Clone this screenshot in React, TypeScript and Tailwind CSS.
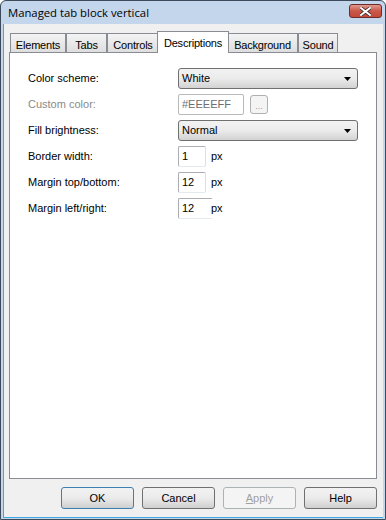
import React from "react";

const tabs = [
  { name: "Elements", w: "w-[56px]" },
  { name: "Tabs", w: "w-[41px]" },
  { name: "Controls", w: "w-[52px]" },
  { name: "Descriptions", w: "w-[72px]" },
  { name: "Background", w: "w-[71px]" },
  { name: "Sound", w: "w-[40px]" },
];

const font = "font-['Liberation_Sans',Arial,sans-serif]";

function Combo({ value }: { value: string }) {
  return (
    <div className="flex h-[21px] w-[180px] items-center justify-between rounded-[3px] border border-[#707070] bg-gradient-to-b from-[#f2f2f2] via-[#ebebeb] to-[#d3d3d3] pl-[3px] pr-[6px]">
      <span className="text-[11px] text-black">{value}</span>
      <svg width="7" height="4" viewBox="0 0 7 4">
        <path d="M0 0h7L3.5 4z" fill="#000" />
      </svg>
    </div>
  );
}

function NumBox({ value, wide }: { value: string; wide?: boolean }) {
  if (wide) {
    return (
      <div className="flex items-center">
        <div className="flex h-[21px] w-[35px] items-center rounded-[2px] border border-[#abadb3] border-b-[#e3e9ef] border-r-[#dbdfe6] bg-white pl-[3px] text-[11px] text-black">
          {value}
        </div>
        <span className="relative -ml-[2px] flex h-[19px] items-center bg-white pr-[2px] text-[11px] text-black">px</span>
      </div>
    );
  }
  return (
    <div className="flex items-center gap-[5px]">
      <div className="flex h-[21px] w-[28px] items-center rounded-[2px] border border-[#abadb3] border-b-[#e3e9ef] border-r-[#dbdfe6] bg-white pl-[3px] text-[11px] text-black">
        {value}
      </div>
      <span className="text-[11px] text-black">px</span>
    </div>
  );
}

function Row({ label, children, dim }: { label: string; children: React.ReactNode; dim?: boolean }) {
  return (
    <div className="flex items-center">
      <span className={`w-[150px] text-[11px] ${dim ? "text-[#8a8a8a]" : "text-black"}`}>{label}</span>
      {children}
    </div>
  );
}

function Btn({ label, primary, disabled }: { label: React.ReactNode; primary?: boolean; disabled?: boolean }) {
  const border = primary ? "border-[#3c7fb1]" : disabled ? "border-[#adb2b5]" : "border-[#707070]";
  const bg = disabled ? "bg-[#f4f4f4]" : "bg-gradient-to-b from-[#f2f2f2] via-[#ebebeb] to-[#cfcfcf]";
  return (
    <div
      className={`flex h-[22px] w-[73px] items-center justify-center rounded-[3px] border ${border} ${bg} text-[11px] ${disabled ? "text-[#a0a0a0]" : "text-black"}`}
    >
      {label}
    </div>
  );
}

export default function App() {
  return (
    <div className={`${font} flex h-[520px] w-[386px] flex-col rounded-t-[6px] border border-[#3c4a5a] bg-[#c4d6ec]`}>
      {/* title bar */}
      <div className="flex h-[23px] items-start justify-between pl-[7px] pr-[3px]">
        <span className="mt-[4px] font-['Open_Sans',sans-serif] text-[11.3px] leading-[15px] text-black">Managed tab block vertical</span>
        <div className="mt-[3px] flex h-[14px] w-[33px] items-center justify-center rounded-[3px] border border-[#6b2c2c] bg-gradient-to-b from-[#e09a8e] via-[#c9574a] to-[#c4493b]">
          <svg width="11" height="9" viewBox="0 0 11 9">
            <path d="M1 1l9 7M10 1L1 8" stroke="#3a2020" strokeWidth="3.4" strokeLinecap="square" />
            <path d="M1 1l9 7M10 1L1 8" stroke="#fff" strokeWidth="2" strokeLinecap="square" />
          </svg>
        </div>
      </div>
      {/* client */}
      <div className="mx-[2px] mb-[1px] flex flex-1 flex-col border-b border-l border-[#3fa8e0] bg-[#f0f0f0] px-[5px] pt-[7px]">
        <div className="flex h-[21px] items-end pl-[1px]">
          {tabs.map((t) => {
            const active = t.name === "Descriptions";
            return (
              <div
                key={t.name}
                className={
                  active
                    ? `relative z-10 -mb-px -mx-[2px] flex h-[22px] ${t.w} shrink-0 items-start justify-center border border-b-0 border-[#898c95] bg-white pt-[3px] text-[11px] tracking-[-0.2px]`
                    : `flex h-[19px] ${t.w} shrink-0 items-start justify-center border border-b-0 border-[#898c95] bg-gradient-to-b from-[#f4f4f4] to-[#dedede] pt-[3px] text-[11px] tracking-[-0.2px]`
                }
              >
                {t.name}
              </div>
            );
          })}
        </div>
        <div className="h-[427px] w-[368px] border border-[#898c95] bg-white pl-[18px] pt-[15px]">
          <div className="flex flex-col gap-[5px]">
            <Row label="Color scheme:">
              <Combo value="White" />
            </Row>
            <Row label="Custom color:" dim>
              <div className="flex items-center gap-[6px]">
                <div className="flex h-[21px] w-[66px] items-center rounded-[2px] border border-[#b9b9b9] bg-white pl-[3px] text-[11px] text-[#6d6d6d]">
                  #EEEEFF
                </div>
                <div className="flex h-[19px] w-[18px] items-end justify-center rounded-[3px] border border-[#b0b0b0] bg-[#f4f4f4] pb-[2px] text-[9px] leading-none text-[#9a9a9a]">
                  ...
                </div>
              </div>
            </Row>
            <Row label="Fill brightness:">
              <Combo value="Normal" />
            </Row>
            <Row label="Border width:">
              <NumBox value="1" />
            </Row>
            <Row label="Margin top/bottom:">
              <NumBox value="12" />
            </Row>
            <Row label="Margin left/right:">
              <NumBox value="12" wide />
            </Row>
          </div>
        </div>
        <div className="mt-[8px] flex justify-end gap-[8px] pr-[1px]">
          <Btn label="OK" primary />
          <Btn label="Cancel" />
          <Btn
            label={
              <span>
                <span className="underline">A</span>pply
              </span>
            }
            disabled
          />
          <Btn label="Help" />
        </div>
      </div>
    </div>
  );
}
